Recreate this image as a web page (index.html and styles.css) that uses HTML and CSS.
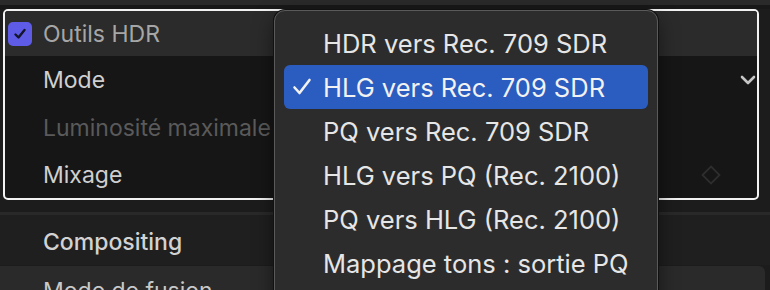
FILE: index.html
```html
<!DOCTYPE html>
<html lang="fr">
  <head>
    <meta charset="UTF-8" />
    <meta name="viewport" content="width=device-width, initial-scale=1.0" />
    <title>Outils HDR</title>
    <link rel="stylesheet" href="styles.css">
  </head>
  <body>
    <div class="inspector">
      <div class="top-strip"></div>

      <section class="group">
        <div class="group-head">
          <span class="check">
            <svg width="16" height="16" viewBox="0 0 16 16">
              <path d="M3.5 8.5 L6.5 11.5 L12.5 4" fill="none" stroke="#14142a" stroke-width="2.4" stroke-linecap="round" stroke-linejoin="round" />
            </svg>
          </span>
          <span class="head-label">Outils HDR</span>
        </div>
        <div class="row">
          <span class="label">Mode</span>
          <svg class="chevron" width="16" height="10" viewBox="0 0 16 10">
            <path d="M2 2 L8 8 L14 2" fill="none" stroke="#c6c6c6" stroke-width="2.6" stroke-linecap="round" stroke-linejoin="round" />
          </svg>
        </div>
        <div class="row">
          <span class="label dim">Luminosité maximale</span>
        </div>
        <div class="row last">
          <span class="label">Mixage</span>
          <svg class="keyframe" width="22" height="22" viewBox="0 0 22 22">
            <path d="M11 2.5 L19.5 11 L11 19.5 L2.5 11 Z" fill="none" stroke="#2d2d2d" stroke-width="1.8" />
          </svg>
        </div>
      </section>

      <div class="spacer"></div>
      <div class="section-title">Compositing</div>
      <div class="row-alt">Mode de fusion</div>

      <ul class="menu">
        <li>HDR vers Rec. 709 SDR</li>
        <li class="selected">
          <svg class="tick" width="20" height="20" viewBox="0 0 20 20">
            <path d="M2.5 10.5 L7.5 16 L17.5 3" fill="none" stroke="#f2f2f2" stroke-width="2.6" stroke-linecap="round" stroke-linejoin="round" />
          </svg>
          HLG vers Rec. 709 SDR
        </li>
        <li>PQ vers Rec. 709 SDR</li>
        <li>HLG vers PQ (Rec. 2100)</li>
        <li>PQ vers HLG (Rec. 2100)</li>
        <li>Mappage tons : sortie PQ</li>
      </ul>
    </div>
  </body>
</html>
```

FILE: styles.css
```css
body {
  margin: 0;
  background-color: #1c1c1c;
  font-family: "Inter", "Noto Sans", sans-serif;
  overflow: hidden;
}

.inspector {
  position: relative;
  width: 770px;
  height: 290px;
  overflow: hidden;
}

.top-strip {
  height: 9px;
  background: linear-gradient(#2a2a2a 0, #2a2a2a 5px, #181818 5px);
}

.group {
  width: 756px;
  margin-left: 3px;
  box-sizing: border-box;
  border: 2px solid #f2f2f2;
  border-radius: 5px;
  overflow: hidden;
  background-color: #161616;
}

.group-head {
  height: 45px;
  display: flex;
  align-items: center;
  padding-left: 3px;
  gap: 11px;
  background-color: #2b2b2b;
}

.check {
  width: 24px;
  height: 24px;
  border-radius: 5px;
  background-color: #5e5ce6;
  display: flex;
  align-items: center;
  justify-content: center;
}

.head-label {
  font-size: 23px;
  color: #a6a6a6;
}

.row {
  height: 48px;
  display: flex;
  align-items: center;
  padding-left: 38px;
  padding-right: 1px;
}

.row.last {
  height: 46px;
}

.label {
  font-size: 23px;
  color: #cfcfcf;
}

.label.dim {
  color: #5a5a5a;
}

.chevron {
  margin-left: auto;
}

.keyframe {
  margin-left: auto;
  margin-right: 34px;
}

.spacer {
  height: 12px;
  border-bottom: 3px solid #292929;
}

.section-title {
  height: 50px;
  box-sizing: border-box;
  padding: 13px 0 0 43px;
  font-size: 23px;
  font-weight: 500;
  color: #d2d2d2;
  background-color: #1f1f1f;
}

.row-alt {
  margin-top: 1px;
  margin-right: 5px;
  height: 60px;
  padding: 11px 0 0 43px;
  font-size: 23px;
  color: #c8c8c8;
  background-color: #2a2a2a;
  border-radius: 0 6px 6px 0;
}

.menu {
  position: absolute;
  left: 274px;
  top: 10px;
  width: 384px;
  box-sizing: border-box;
  margin: 0;
  padding: 10px 9px;
  list-style: none;
  background-color: #2c2c2c;
  border: 1px solid #5a5a5a;
  border-radius: 11px;
  box-shadow: 0 0 0 1px #111, 0 8px 20px rgba(0, 0, 0, 0.5);
  height: 300px;
}

.menu li {
  position: relative;
  height: 44px;
  display: flex;
  align-items: center;
  padding-left: 39px;
  font-size: 25.5px;
  color: #e6e6e6;
  border-radius: 6px;
}

.menu li.selected {
  background-color: #2b5cbf;
  color: #f2f2f2;
}

.menu .tick {
  position: absolute;
  left: 8px;
  top: 12px;
}
```
